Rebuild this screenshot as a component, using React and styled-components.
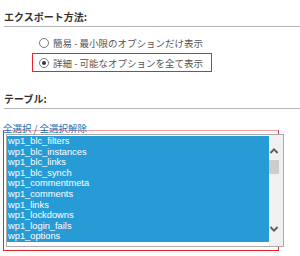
import React from 'react'
import styled, { createGlobalStyle } from 'styled-components'

const GlobalStyle = createGlobalStyle`
  html, body { margin: 0; padding: 0; background: #fff; }
  body { font-family: "Noto Sans CJK JP", "Noto Sans", sans-serif; }
`

const tables = [
  'wp1_blc_filters',
  'wp1_blc_instances',
  'wp1_blc_links',
  'wp1_blc_synch',
  'wp1_commentmeta',
  'wp1_comments',
  'wp1_links',
  'wp1_lockdowns',
  'wp1_login_fails',
  'wp1_options',
]

const options = [
  { label: '簡易 - 最小限のオプションだけ表示', checked: false },
  { label: '詳細 - 可能なオプションを全て表示', checked: true },
]

export default function App() {
  return (
    <Page>
      <GlobalStyle />
      <Heading>エクスポート方法:</Heading>
      <OptionList>
        {options.map((o) => (
          <OptionRow key={o.label} $marked={o.checked}>
            <Radio $checked={o.checked} />
            <OptionLabel>{o.label}</OptionLabel>
          </OptionRow>
        ))}
      </OptionList>

      <Heading $gap={17}>テーブル:</Heading>
      <LinkRow>
        <SelectLink href="#">全選択 / 全選択解除</SelectLink>
      </LinkRow>

      <Marked>
        <ListBox>
          <Items>
            {tables.map((t) => (
              <Item key={t}>{t}</Item>
            ))}
          </Items>
          <Scrollbar>
            <Chevron viewBox="0 0 8 5">
              <path d="M1 4.2 L4 1.2 L7 4.2" />
            </Chevron>
            <Thumb />
            <Spacer />
            <Chevron viewBox="0 0 8 5">
              <path d="M1 0.8 L4 3.8 L7 0.8" />
            </Chevron>
          </Scrollbar>
        </ListBox>
      </Marked>
    </Page>
  )
}

const Page = styled.div`
  width: 300px;
  height: 256px;
  padding: 7px 0 0 4px;
  box-sizing: border-box;
  overflow: hidden;
`

const Heading = styled.h3`
  margin: ${(p) => p.$gap || 0}px 0 0 0;
  height: 19px;
  line-height: 19px;
  font-size: 10px;
  font-weight: 600;
  color: #333;
  border-bottom: 1px solid #b4b4b4;
`

const OptionList = styled.div`
  margin: 7px 0 0 28px;
  display: flex;
  flex-direction: column;
  align-items: flex-start;
`

const OptionRow = styled.label`
  display: flex;
  align-items: center;
  height: ${(p) => (p.$marked ? 17 : 18)}px;
  padding: 0 8px 0 6px;
  border: 1px solid ${(p) => (p.$marked ? '#e8242a' : 'transparent')};
  border-top-width: ${(p) => (p.$marked ? 1 : 0)}px;
`

const Radio = styled.span`
  width: 8px;
  height: 8px;
  border-radius: 50%;
  border: 1px solid #7a7a7a;
  background: #fff;
  position: relative;
  flex: none;

  &::after {
    content: "";
    display: ${(p) => (p.$checked ? 'block' : 'none')};
    position: absolute;
    left: 2px;
    top: 2px;
    width: 4px;
    height: 4px;
    border-radius: 50%;
    background: #333;
  }
`

const OptionLabel = styled.span`
  margin-left: 4px;
  font-size: 9.5px;
  color: #555;
  white-space: nowrap;
`

const LinkRow = styled.div`
  padding-top: 12px;
  height: 9px;
  line-height: 9px;
`

const SelectLink = styled.a`
  font-size: 9.5px;
  color: #1e6fb0;
  text-decoration: none;
  margin-left: -1px;
`

const Marked = styled.div`
  margin: 0 0 0 -1px;
  width: 276px;
  height: 121px;
  box-sizing: border-box;
  border: 1px solid #e8242a;
  border-top-color: #f4a0a3;
  padding: 3px 0 0 2px;
`

const ListBox = styled.div`
  width: 278px;
  height: 113px;
  box-sizing: border-box;
  border: 1px solid #ababab;
  background: #fff;
  display: flex;
`

const Items = styled.div`
  width: 262px;
  padding: 1px 0 3px 0;
  display: flex;
  flex-direction: column;
`

const Item = styled.div`
  height: 10.6px;
  line-height: 10.6px;
  padding-left: 1px;
  background: #279bd6;
  color: #fff;
  font-family: "Liberation Sans", Arial, sans-serif;
  font-size: 9.3px;
  white-space: nowrap;
`

const Scrollbar = styled.div`
  flex: 1;
  background: #f0f0f0;
  display: flex;
  flex-direction: column;
  padding: 13px 3px 14px 0;
`

const Chevron = styled.svg`
  width: 10px;
  height: 6px;
  fill: none;
  stroke: #606060;
  stroke-width: 1.6;
`

const Thumb = styled.div`
  margin-top: 6px;
  width: 10px;
  height: 14px;
  background: #cdcdcd;
`

const Spacer = styled.div`
  flex: 1;
`
